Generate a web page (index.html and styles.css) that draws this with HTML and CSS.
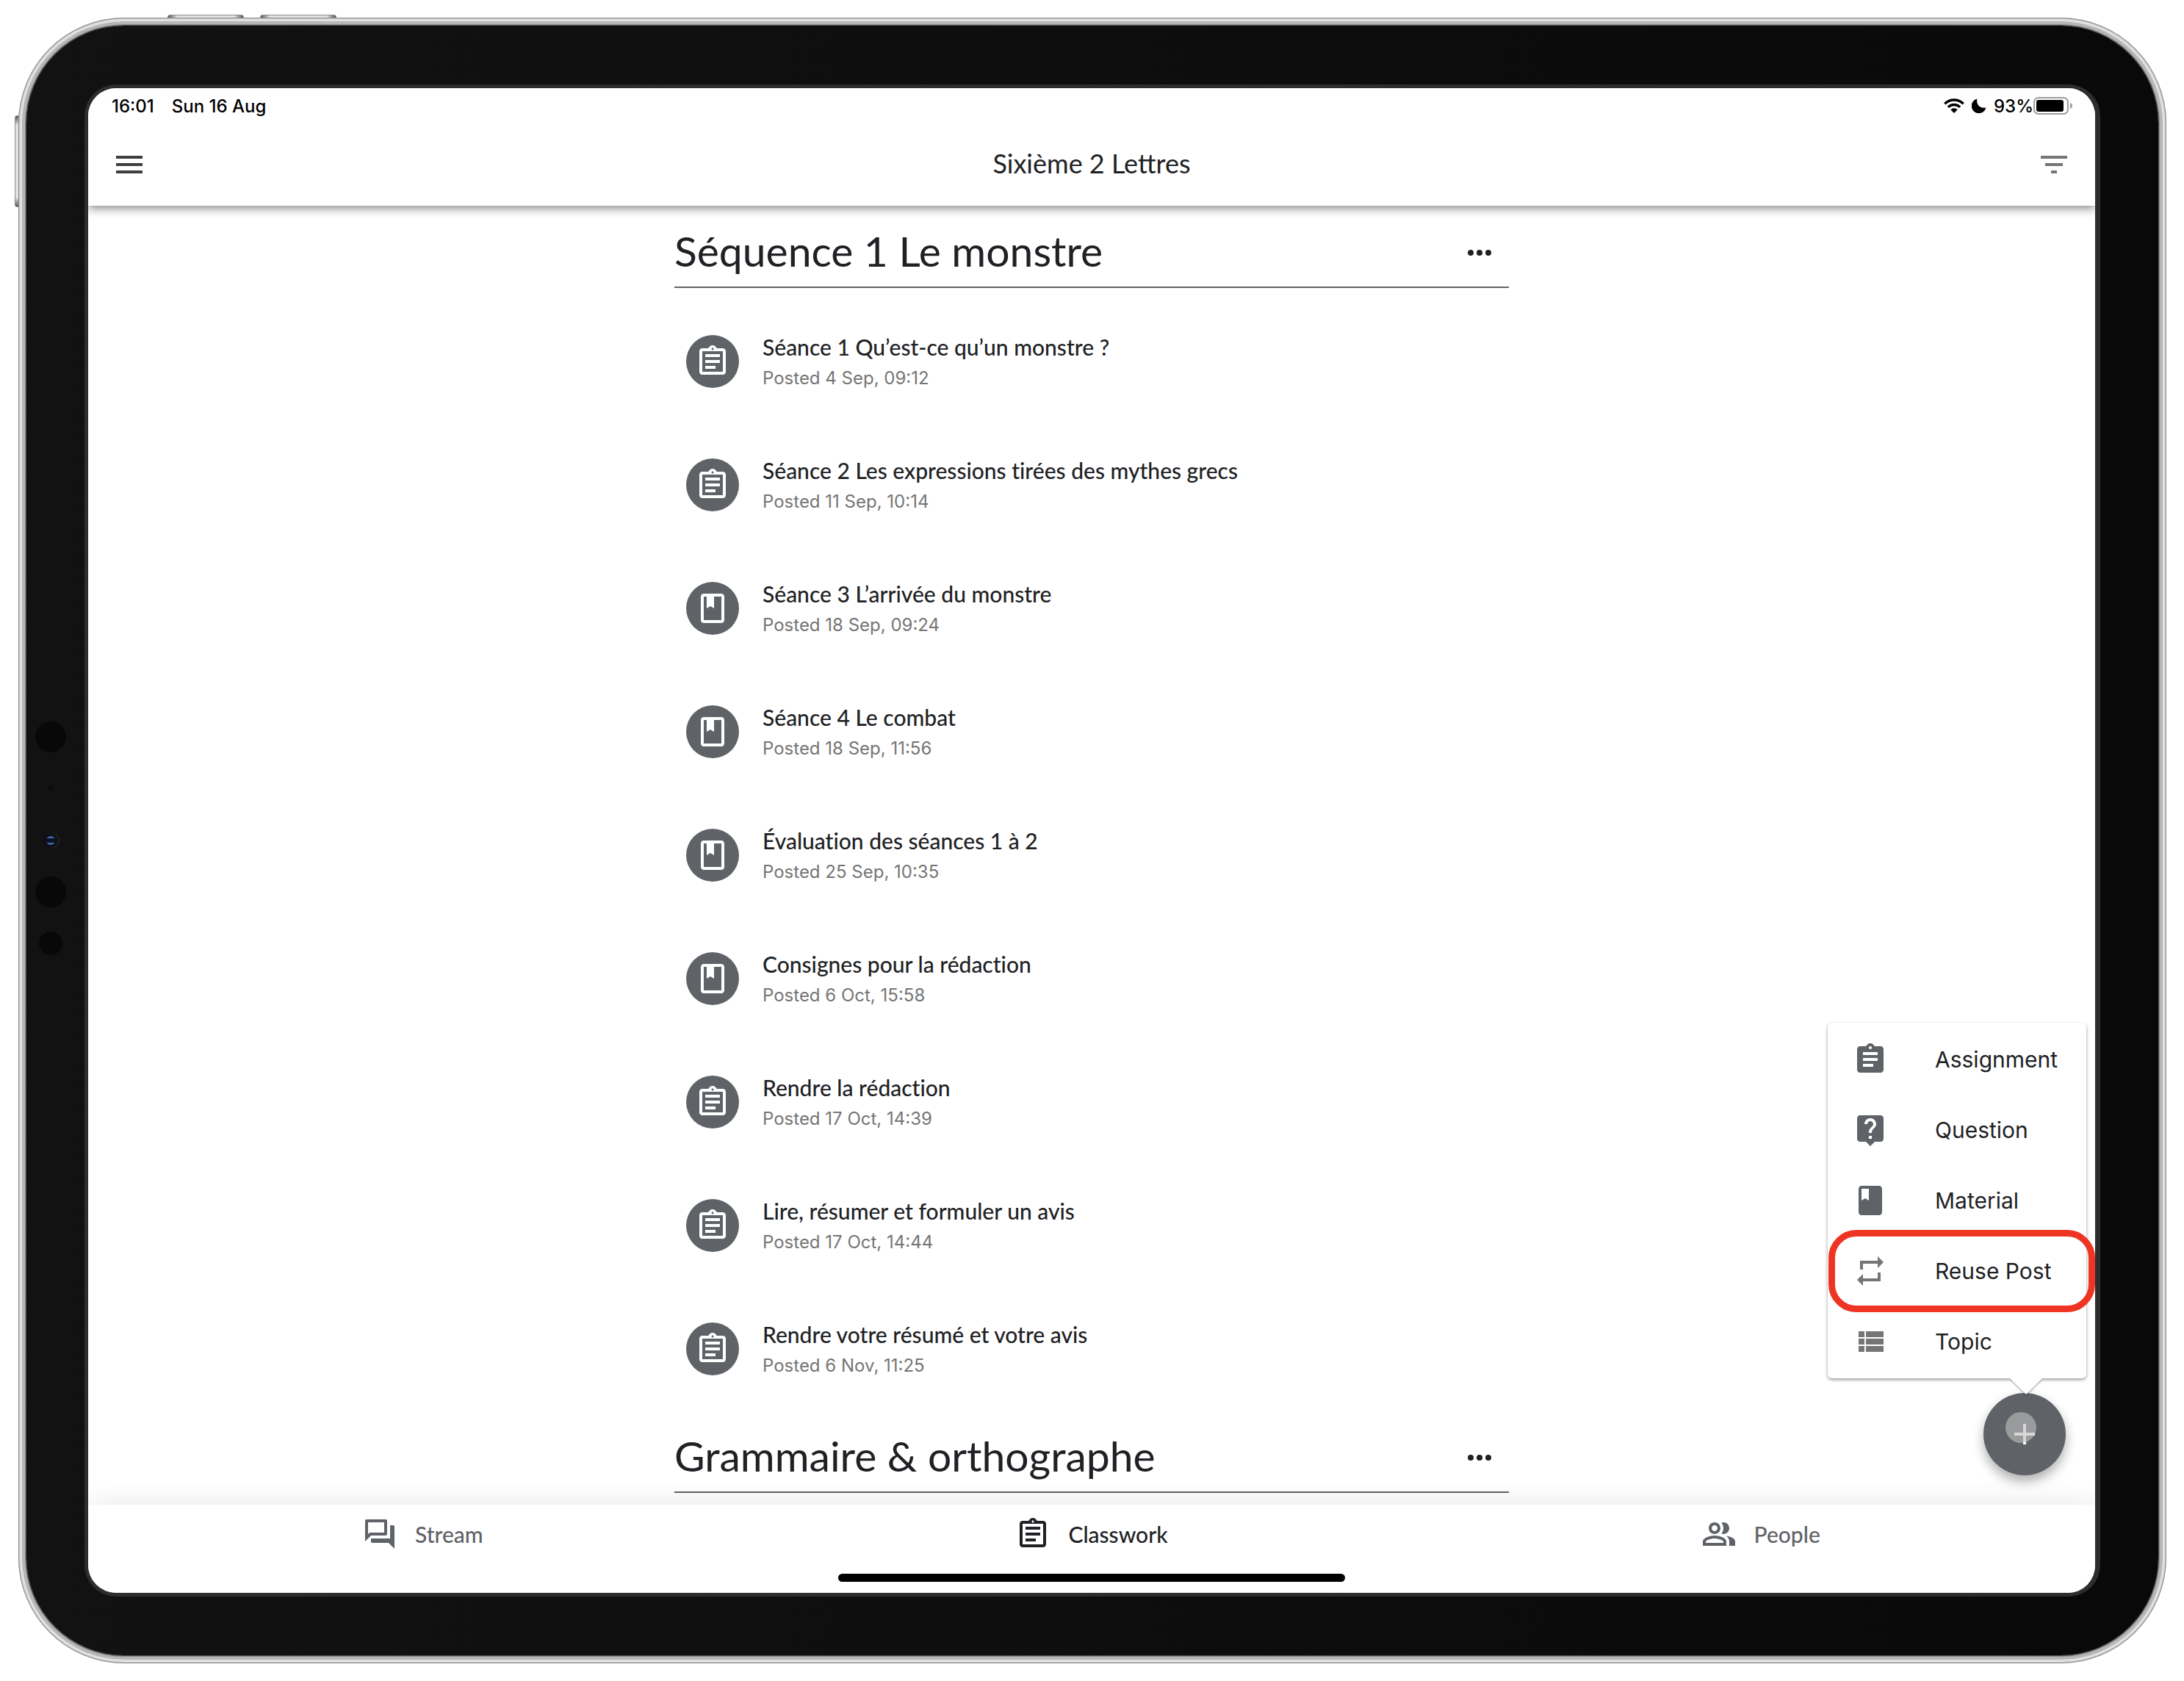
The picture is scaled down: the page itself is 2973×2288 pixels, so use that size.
FILE: index.html
```html
<!DOCTYPE html>
<html lang="fr">
<head>
<meta charset="utf-8">
<meta name="viewport" content="width=device-width, initial-scale=1">
<title>Sixième 2 Lettres</title>
<link rel="stylesheet" href="styles.css">
</head>
<body>
<svg width="0" height="0" class="sprite" aria-hidden="true">
  <symbol id="i-task" viewBox="0 0 24 24"><path d="M7 15h7v2H7zm0-4h10v2H7zm0-4h10v2H7zm12-4h-4.18C14.4 1.84 13.3 1 12 1c-1.3 0-2.4.84-2.82 2H5c-.14 0-.27.01-.4.04-.39.08-.74.28-1.01.55-.18.18-.33.4-.43.64-.1.23-.16.49-.16.77v14c0 .27.06.54.16.78s.25.45.43.64c.27.27.62.47 1.01.55.13.02.26.03.4.03h14c1.1 0 2-.9 2-2V5c0-1.1-.9-2-2-2zm-7-.25c.41 0 .75.34.75.75s-.34.75-.75.75-.75-.34-.75-.75.34-.75.75-.75zM19 19H5V5h14v14z"/></symbol>
  <symbol id="i-book" viewBox="0 0 24 24"><path fill-rule="evenodd" d="M18 2H6c-1.1 0-2 .9-2 2v16c0 1.1.9 2 2 2h12c1.1 0 2-.9 2-2V4c0-1.1-.9-2-2-2zM6 4h12v16H6z"/><path d="M8 3h5v9l-2.5-1.5L8 12z"/></symbol>
  <symbol id="i-task-fill" viewBox="0 0 24 24"><path d="M19 3h-4.18C14.4 1.84 13.3 1 12 1c-1.3 0-2.4.84-2.82 2H5c-1.1 0-2 .9-2 2v14c0 1.1.9 2 2 2h14c1.1 0 2-.9 2-2V5c0-1.1-.9-2-2-2zm-7 0c.55 0 1 .45 1 1s-.45 1-1 1-1-.45-1-1 .45-1 1-1zm2 14H7v-2h7v2zm3-4H7v-2h10v2zm0-4H7V7h10v2z"/></symbol>
  <symbol id="i-question" viewBox="0 0 24 24"><path d="M19 2H5c-1.11 0-2 .9-2 2v14c0 1.1.89 2 2 2h4l3 3 3-3h4c1.1 0 2-.9 2-2V4c0-1.1-.9-2-2-2zm-6 16h-2v-2h2v2zm2.07-7.75l-.9.92C13.45 11.9 13 12.5 13 14h-2v-.5c0-1.1.45-2.1 1.17-2.83l1.24-1.26c.37-.36.59-.86.59-1.41 0-1.1-.9-2-2-2s-2 .9-2 2H8c0-2.21 1.79-4 4-4s4 1.79 4 4c0 .88-.36 1.68-.93 2.25z"/></symbol>
  <symbol id="i-book-fill" viewBox="0 0 24 24"><path fill-rule="evenodd" d="M18 2H6c-1.1 0-2 .9-2 2v16c0 1.1.9 2 2 2h12c1.1 0 2-.9 2-2V4c0-1.1-.9-2-2-2zM6 4h5v8l-2.5-1.5L6 12V4z"/></symbol>
  <symbol id="i-repeat" viewBox="0 0 24 24"><path d="M7 7h10v3l4-4-4-4v3H5v6h2V7zm10 10H7v-3l-4 4 4 4v-3h12v-6h-2v4z"/></symbol>
  <symbol id="i-list" viewBox="0 0 24 24"><path d="M4 14h4v-4H4v4zm0 5h4v-4H4v4zM4 9h4V5H4v4zm5 5h12v-4H9v4zm0 5h12v-4H9v4zM9 5v4h12V5H9z"/></symbol>
  <symbol id="i-forum" viewBox="0 0 24 24"><path d="M15 4v7H5.170L4 12.170V4h11m1-2H3c-.55 0-1 .45-1 1v14l4-4h10c.55 0 1-.45 1-1V3c0-.55-.45-1-1-1zm5 4h-2v9H6v2c0 .55.45 1 1 1h11l4 4V7c0-.55-.45-1-1-1z"/></symbol>
  <symbol id="i-people" viewBox="0 0 24 24"><path d="M16.670 13.130C18.040 14.060 19 15.320 19 17v3h4v-3c0-2.180-3.570-3.470-6.330-3.870zM15 12c2.210 0 4-1.790 4-4s-1.790-4-4-4c-.47 0-.91.1-1.330.24C14.500 5.270 15 6.580 15 8s-.5 2.730-1.330 3.760c.42.14.86.24 1.330.24zM9 12c2.210 0 4-1.790 4-4s-1.790-4-4-4-4 1.790-4 4 1.790 4 4 4zm0-6c1.100 0 2 .9 2 2s-.9 2-2 2-2-.9-2-2 .9-2 2-2zM9 13c-2.670 0-8 1.340-8 4v3h16v-3c0-2.660-5.330-4-8-4zm6 5H3v-.99C3.200 16.290 6.300 15 9 15s5.800 1.290 6 2v1z"/></symbol>
  <symbol id="i-menu" viewBox="0 0 24 24"><path d="M3 6h18v2H3zm0 5h18v2H3zm0 5h18v2H3z"/></symbol>
  <symbol id="i-filter" viewBox="0 0 24 24"><path d="M3 6h18v2H3zm3 5h12v2H6zm4 5h4v2h-4z"/></symbol>
  <symbol id="i-more" viewBox="0 0 24 24"><circle cx="6" cy="12" r="2"/><circle cx="12" cy="12" r="2"/><circle cx="18" cy="12" r="2"/></symbol>
</svg>

<div class="stage">
  <div class="device">
    <span class="key key-up"></span>
    <span class="key key-down"></span>
    <span class="key key-power"></span>
    <div class="bezel">
      <svg class="camera" width="48" height="332" viewBox="0 0 48 332" aria-hidden="true">
        <circle cx="24" cy="25" r="21" fill="#080808"/>
        <circle cx="24" cy="95" r="4" fill="#0c0c0c"/>
        <circle cx="26" cy="166" r="11" fill="#191a1c"/>
        <circle cx="23" cy="166" r="10" fill="#0f1013"/>
        <circle cx="24" cy="166" r="6" fill="#3a69ad"/>
        <rect x="17" y="163" width="14" height="6" rx="3" fill="#0b1226"/>
        <circle cx="24" cy="236" r="21" fill="#080808"/>
        <circle cx="24" cy="306" r="16" fill="#080808"/>
      </svg>

      <div class="screen">
        <div class="status">
          <span class="status-time">16:01</span>
          <span>Sun 16 Aug</span>
          <div class="status-right">
            <svg width="28" height="20" viewBox="0 0 28 20" aria-hidden="true"><g fill="none" stroke="#000" stroke-width="3.400"><path d="M1.300 7.200a18 18 0 0 1 25.400 0"/><path d="M5.900 11.900a11.500 11.500 0 0 1 16.200 0"/></g><path d="M9.300 15.300a6.600 6.600 0 0 1 9.400 0L14 20z"/></svg>
            <svg class="moon" width="20" height="20" viewBox="0 0 20 20" aria-hidden="true"><path d="M7.500.5C5.800 7 10 14.300 19.500 12.500A10 10 0 1 1 7.500.5z"/></svg>
            <span>93%</span>
            <svg class="battery" width="54" height="24" viewBox="0 0 54 24" aria-hidden="true"><rect x="1" y="1" width="46" height="22" rx="6" fill="none" stroke="#9c9c9c" stroke-width="2"/><rect x="4" y="4" width="37" height="16" rx="3"/><path d="M50 8c4 1.500 4 6.500 0 8z" fill="#9c9c9c"/></svg>
          </div>
        </div>

        <header class="appbar">
          <button class="icon-btn menu-btn" aria-label="Menu"><svg class="icon"><use href="#i-menu"/></svg></button>
          <h1>Sixième 2 Lettres</h1>
          <button class="icon-btn filter-btn" aria-label="Filter"><svg class="icon"><use href="#i-filter"/></svg></button>
        </header>

        <main class="feed">
          <section>
            <div class="topic">
              <h2>Séquence 1 Le monstre</h2>
              <button class="icon-btn" aria-label="More options"><svg class="icon"><use href="#i-more"/></svg></button>
            </div>
            <ul class="posts">
              <li><a class="post" href="#p1"><span class="badge"><svg class="icon"><use href="#i-task"/></svg></span><span class="post-text"><span class="post-title">Séance 1 Qu’est-ce qu’un monstre ?</span><span class="post-date">Posted 4 Sep, 09:12</span></span></a></li>
              <li><a class="post" href="#p2"><span class="badge"><svg class="icon"><use href="#i-task"/></svg></span><span class="post-text"><span class="post-title">Séance 2 Les expressions tirées des mythes grecs</span><span class="post-date">Posted 11 Sep, 10:14</span></span></a></li>
              <li><a class="post" href="#p3"><span class="badge"><svg class="icon"><use href="#i-book"/></svg></span><span class="post-text"><span class="post-title">Séance 3 L’arrivée du monstre</span><span class="post-date">Posted 18 Sep, 09:24</span></span></a></li>
              <li><a class="post" href="#p4"><span class="badge"><svg class="icon"><use href="#i-book"/></svg></span><span class="post-text"><span class="post-title">Séance 4 Le combat</span><span class="post-date">Posted 18 Sep, 11:56</span></span></a></li>
              <li><a class="post" href="#p5"><span class="badge"><svg class="icon"><use href="#i-book"/></svg></span><span class="post-text"><span class="post-title">Évaluation des séances 1 à 2</span><span class="post-date">Posted 25 Sep, 10:35</span></span></a></li>
              <li><a class="post" href="#p6"><span class="badge"><svg class="icon"><use href="#i-book"/></svg></span><span class="post-text"><span class="post-title">Consignes pour la rédaction</span><span class="post-date">Posted 6 Oct, 15:58</span></span></a></li>
              <li><a class="post" href="#p7"><span class="badge"><svg class="icon"><use href="#i-task"/></svg></span><span class="post-text"><span class="post-title">Rendre la rédaction</span><span class="post-date">Posted 17 Oct, 14:39</span></span></a></li>
              <li><a class="post" href="#p8"><span class="badge"><svg class="icon"><use href="#i-task"/></svg></span><span class="post-text"><span class="post-title">Lire, résumer et formuler un avis</span><span class="post-date">Posted 17 Oct, 14:44</span></span></a></li>
              <li><a class="post" href="#p9"><span class="badge"><svg class="icon"><use href="#i-task"/></svg></span><span class="post-text"><span class="post-title">Rendre votre résumé et votre avis</span><span class="post-date">Posted 6 Nov, 11:25</span></span></a></li>
            </ul>
          </section>
          <section>
            <div class="topic">
              <h2>Grammaire &amp; orthographe</h2>
              <button class="icon-btn" aria-label="More options"><svg class="icon"><use href="#i-more"/></svg></button>
            </div>
          </section>
        </main>

        <footer class="tabbar">
          <nav class="tabs">
            <a class="tab" href="#stream"><svg class="icon"><use href="#i-forum"/></svg>Stream</a>
            <a class="tab tab-active" href="#classwork" aria-current="page"><svg class="icon"><use href="#i-task"/></svg>Classwork</a>
            <a class="tab" href="#people"><svg class="icon"><use href="#i-people"/></svg>People</a>
          </nav>
          <div class="home-bar"></div>
        </footer>

        <button class="fab" aria-label="Create">
          <svg width="112" height="112" viewBox="0 0 112 112"><path d="M54 42h4v12h12v4H58v12h-4V58H42v-4h12z" fill="#fff"/><circle cx="51" cy="47" r="21" fill="#bebebe" fill-opacity=".62"/></svg>
        </button>
        <div class="popup">
          <button class="option"><svg class="icon"><use href="#i-task-fill"/></svg>Assignment</button>
          <button class="option"><svg class="icon"><use href="#i-question"/></svg>Question</button>
          <button class="option"><svg class="icon"><use href="#i-book-fill"/></svg>Material</button>
          <button class="option option-soft option-marked"><svg class="icon"><use href="#i-repeat"/></svg>Reuse Post</button>
          <button class="option option-soft"><svg class="icon"><use href="#i-list"/></svg>Topic</button>
          <svg class="caret" width="44" height="22" viewBox="0 0 44 22" aria-hidden="true"><path d="M0 0h44L22 22z" fill="#fff"/></svg>
        </div>
      </div>
    </div>
  </div>
</div>
</body>
</html>
```
FILE: styles.css
```css
* { box-sizing: border-box; }

body {
  margin: 0;
  background: #fff;
  color: #202124;
  font-family: Inter, "Liberation Sans", sans-serif;
}

h1, h2, ul { margin: 0; padding: 0; }
ul { list-style: none; }
a { color: inherit; text-decoration: none; }

button {
  padding: 0;
  border: 0;
  background: none;
  color: inherit;
  font: inherit;
}

.sprite { position: absolute; }

.icon {
  display: block;
  flex: none;
  width: 48px;
  height: 48px;
  fill: currentColor;
}

/* Tablet body */
.stage {
  display: flex;
  min-height: 100vh;
  padding: 24px 24px 24px 25px;
}

.device {
  position: relative;
  display: flex;
  flex: 1;
  padding: 11px;
  border-radius: 144px;
  background: #b4b7b4;
  box-shadow: inset 0 0 0 1px #8f8f8f, inset 0 0 0 2px #c4c6c4, inset 0 0 0 5px #e0e2e0;
}

.key {
  position: absolute;
  z-index: -1;
  background: #e2e4e2;
  border: 1px solid #8a8f8b;
  border-radius: 3px;
}

.key-up, .key-down {
  top: -4px;
  width: 104px;
  height: 8px;
  background: linear-gradient(90deg, #555, #e2e4e2 12%, #e2e4e2 88%, #555);
}
.key-up { left: 203px; }
.key-down { left: 329px; }
.key-power {
  top: 133px;
  left: -5px;
  width: 8px;
  height: 125px;
  background: linear-gradient(#555, #e2e4e2 10%, #e2e4e2 90%, #555);
}

.bezel {
  position: relative;
  display: flex;
  flex: 1;
  padding: 80px 79px;
  border-radius: 133px;
  background: linear-gradient(90deg, #121212, #090909);
  box-shadow: 0 0 0 1px #4a4b4a, 0 0 0 2px #8d8f8d;
}

.camera {
  position: absolute;
  left: 9px;
  top: 50%;
  transform: translateY(-50%);
}

.screen {
  position: relative;
  display: flex;
  flex: 1;
  flex-direction: column;
  border: 5px solid #2d2d2d;
  border-right-width: 7px;
  border-radius: 43px;
  background: #fff;
  overflow: hidden;
}

/* Status line */
.status {
  position: relative;
  z-index: 2;
  display: flex;
  align-items: center;
  height: 48px;
  padding: 0 30px 0 32px;
  background: #fff;
  color: #000;
  font-size: 24px;
  font-weight: 500;
}
.status-time { margin-right: 24px; }
.status-right {
  display: flex;
  align-items: center;
  margin-left: auto;
}
.moon { margin: 0 10px; }

/* App bar */
.appbar {
  position: relative;
  z-index: 1;
  display: flex;
  align-items: center;
  justify-content: space-between;
  height: 112px;
  padding: 0 32px;
  background: #fff;
  box-shadow: 0 4px 12px rgba(0, 0, 0, .45);
}
.appbar h1 {
  padding-bottom: 4px;
  font: 400 36px/48px Lato, sans-serif;
}
.menu-btn { color: #3f3f3f; }
.filter-btn { color: #757575; }

/* Classwork feed */
.feed {
  flex: 1;
  width: 100%;
  max-width: 1136px;
  margin: 0 auto;
  padding-bottom: 16px;
}

.topic {
  display: flex;
  align-items: center;
  justify-content: space-between;
  height: 112px;
  padding: 18px 16px 0 0;
  border-bottom: 2px solid #5f6368;
}
.topic h2 {
  padding-bottom: 6px;
  font: 400 57px/64px Lato, sans-serif;
}

.posts { padding-top: 16px; }

.post {
  display: flex;
  align-items: center;
  gap: 32px;
  height: 168px;
  padding-left: 16px;
}

.badge {
  display: flex;
  flex: none;
  align-items: center;
  justify-content: center;
  width: 72px;
  height: 72px;
  border-radius: 50%;
  background: #5f6368;
  color: #fff;
}

.post-text {
  display: flex;
  flex-direction: column;
  padding-top: 6px;
}
.post-title {
  font: 500 30px/40px Lato, sans-serif;
  font-variant-ligatures: none;
}
.post-date {
  color: #757575;
  font-size: 24px;
  line-height: 46px;
}

/* Bottom navigation */
.tabbar {
  position: relative;
  height: 120px;
  background: #fff;
  box-shadow: 0 0 40px rgba(0, 0, 0, .1);
}
.tabs { display: flex; }
.tab {
  display: flex;
  flex: 1;
  align-items: center;
  justify-content: center;
  gap: 24px;
  height: 80px;
  color: #5f6368;
  font: 500 30px/40px Lato, sans-serif;
}
.tab-active { color: #202124; }
.home-bar {
  width: 690px;
  height: 11px;
  margin: 14px auto 0;
  border-radius: 6px;
  background: #000;
}

/* Create button and its popup */
.fab {
  position: absolute;
  right: 40px;
  bottom: 160px;
  width: 112px;
  height: 112px;
  border-radius: 50%;
  background: #5f6368;
  box-shadow: 0 8px 16px rgba(0, 0, 0, .32);
}
.fab svg { display: block; }

.popup {
  position: absolute;
  right: 12px;
  bottom: 292px;
  width: 352px;
  padding: 2px 0;
  border-radius: 6px;
  background: #fff;
  box-shadow: 0 2px 4px rgba(0, 0, 0, .4);
}

.option {
  position: relative;
  display: flex;
  align-items: center;
  gap: 64px;
  width: 100%;
  height: 96px;
  padding-left: 34px;
  font-size: 30px;
}
.option .icon { color: #5f6368; }
.option-soft .icon { color: #757575; }

/* Ring that calls out the highlighted option */
.option-marked::after {
  content: "";
  position: absolute;
  inset: -8px -12px -8px 1px;
  border: 9px solid #ee3524;
  border-radius: 38px;
}

.caret {
  position: absolute;
  right: 60px;
  top: 100%;
  filter: drop-shadow(0 2px 1px rgba(0, 0, 0, .3));
}
```
